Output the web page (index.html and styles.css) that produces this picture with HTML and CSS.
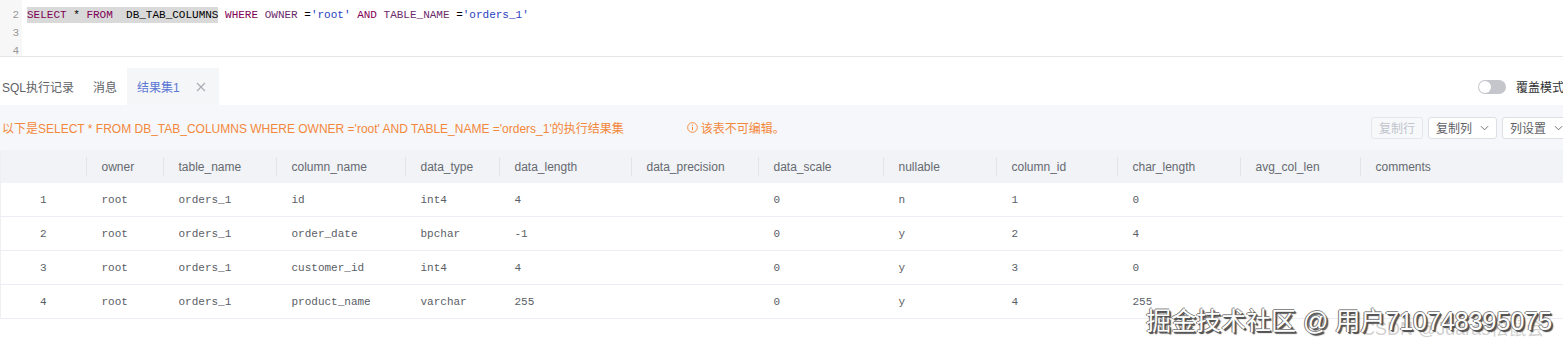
FILE: index.html
```html
<!DOCTYPE html>
<html lang="zh-CN">
<head>
    <meta charset="UTF-8">
    <title>结果集</title>
    <link rel="stylesheet" href="styles.css">
</head>
<body>
    <div class="editor">
        <div class="gutter">
            <div class="ln">1</div>
            <div class="ln">2</div>
            <div class="ln">3</div>
            <div class="ln">4</div>
        </div>
        <div class="code">
            <div class="line"></div>
            <div class="line"><span class="sel"><span class="kw">SELECT</span> * <span class="kw">FROM</span>  DB_TAB_COLUMNS</span> <span class="kw">WHERE</span> <span class="id">OWNER</span> =<span class="str">'root'</span> <span class="kw">AND</span> <span class="id">TABLE_NAME</span> =<span class="str">'orders_1'</span></div>
            <div class="line"></div>
            <div class="line"></div>
        </div>
    </div>

    <div class="tabs-bar">
        <div class="tabs">
            <div class="tab">SQL执行记录</div>
            <div class="tab">消息</div>
            <div class="tab active">结果集1
                <svg class="close" width="10" height="10" viewBox="0 0 10 10"><path d="M1 1L9 9M9 1L1 9" stroke="#a8abb2" stroke-width="1.1" fill="none"/></svg>
            </div>
        </div>
        <div class="mode">
            <span class="switch"><span class="knob"></span></span>
            <span class="mode-label">覆盖模式</span>
        </div>
    </div>

    <div class="toolbar">
        <div class="msg">以下是SELECT * FROM DB_TAB_COLUMNS WHERE OWNER ='root' AND TABLE_NAME ='orders_1'的执行结果集</div>
        <div class="msg warn">
            <svg width="11" height="11" viewBox="0 0 12 12"><circle cx="6" cy="6" r="5.3" stroke="#f3883c" stroke-width="1" fill="none"/><path d="M6 5.2V9" stroke="#f3883c" stroke-width="1.1"/><circle cx="6" cy="3.5" r="0.7" fill="#f3883c"/></svg>
            该表不可编辑。
        </div>
        <div class="actions">
            <button class="btn" disabled>复制行</button>
            <button class="btn">复制列 <svg width="9" height="6" viewBox="0 0 10 6"><path d="M1 1L5 5L9 1" stroke="#606266" stroke-width="1" fill="none"/></svg></button>
            <button class="btn">列设置 <svg width="9" height="6" viewBox="0 0 10 6"><path d="M1 1L5 5L9 1" stroke="#606266" stroke-width="1" fill="none"/></svg></button>
        </div>
    </div>

    <table class="grid">
        <colgroup>
            <col style="width:85px"><col style="width:77px"><col style="width:113px"><col style="width:129px">
            <col style="width:94px"><col style="width:132px"><col style="width:127px"><col style="width:125px">
            <col style="width:113px"><col style="width:121px"><col style="width:123px"><col style="width:120px">
            <col style="width:230px">
        </colgroup>
        <thead>
            <tr>
                <th></th><th>owner</th><th>table_name</th><th>column_name</th><th>data_type</th><th>data_length</th>
                <th>data_precision</th><th>data_scale</th><th>nullable</th><th>column_id</th><th>char_length</th>
                <th>avg_col_len</th><th>comments</th>
            </tr>
        </thead>
        <tbody>
            <tr><td class="no">1</td><td>root</td><td>orders_1</td><td>id</td><td>int4</td><td>4</td><td></td><td>0</td><td>n</td><td>1</td><td>0</td><td></td><td></td></tr>
            <tr><td class="no">2</td><td>root</td><td>orders_1</td><td>order_date</td><td>bpchar</td><td>-1</td><td></td><td>0</td><td>y</td><td>2</td><td>4</td><td></td><td></td></tr>
            <tr><td class="no">3</td><td>root</td><td>orders_1</td><td>customer_id</td><td>int4</td><td>4</td><td></td><td>0</td><td>y</td><td>3</td><td>0</td><td></td><td></td></tr>
            <tr><td class="no">4</td><td>root</td><td>orders_1</td><td>product_name</td><td>varchar</td><td>255</td><td></td><td>0</td><td>y</td><td>4</td><td>255</td><td></td><td></td></tr>
        </tbody>
    </table>

    <div class="wm-back">CSDN @Jdaras松鼠会</div>
    <div class="wm">掘金技术社区 @ 用户710748395075</div>
</body>
</html>
```

FILE: styles.css
```css
body {
    margin: 0;
    font-family: "Liberation Sans", "Noto Sans CJK SC", sans-serif;
    background: #fff;
    width: 1563px;
    height: 345px;
    overflow: hidden;
    position: relative;
}
.editor {
    display: flex;
    height: 56px;
    border-bottom: 1px solid #e4e6ea;
    overflow: hidden;
    font-family: "Liberation Mono", monospace;
    font-size: 11px;
}
.gutter {
    width: 22px;
    background: #f7f7f7;
    margin-top: -12px;
    color: #999;
}
.ln {
    height: 18px;
    line-height: 18px;
    text-align: right;
    padding-right: 3px;
}
.code {
    margin-top: -12px;
    padding-left: 5px;
}
.line {
    height: 18px;
    line-height: 18px;
    white-space: pre;
    color: #000;
}
.sel {
    background: #d9d9d9;
    padding: 2px 0;
}
.kw {
    color: #7f0055;
}
.id {
    color: #6b2a6b;
}
.str {
    color: #2a3fc0;
}
.tabs-bar {
    display: flex;
    justify-content: space-between;
    align-items: flex-end;
    height: 48px;
}
.tabs {
    display: flex;
    align-items: stretch;
    height: 37px;
}
.tab {
    display: flex;
    align-items: center;
    font-size: 12px;
    color: #606266;
    padding: 0 0 0 2px;
}
.tab + .tab {
    padding-left: 19px;
}
.tab.active {
    background: #f5f6f8;
    color: #5b78d4;
    margin-left: 10px;
    padding: 0 13px 0 10px;
}
.close {
    margin-left: 16px;
}
.mode {
    display: flex;
    align-items: center;
    height: 37px;
    margin-right: -1px;
}
.switch {
    position: relative;
    width: 28px;
    height: 14px;
    border-radius: 7px;
    background: #c4c6cc;
    margin-right: 10px;
}
.knob {
    position: absolute;
    top: 1px;
    left: 1px;
    width: 12px;
    height: 12px;
    border-radius: 50%;
    background: #fff;
}
.mode-label {
    font-size: 12px;
    color: #303133;
}
.toolbar {
    display: flex;
    align-items: center;
    height: 45px;
    background: #f5f7fa;
    padding-left: 2px;
}
.msg {
    font-size: 12px;
    color: #f3883c;
}
.warn {
    display: flex;
    align-items: center;
    gap: 3px;
    margin-left: 63px;
}
.actions {
    display: flex;
    gap: 5px;
    margin-left: auto;
    margin-right: -8px;
}
.btn {
    display: flex;
    align-items: center;
    gap: 8px;
    height: 22px;
    padding: 0 7px;
    font-family: "Liberation Sans", "Noto Sans CJK SC", sans-serif;
    font-size: 12px;
    color: #606266;
    background: #fff;
    border: 1px solid #dcdfe6;
    border-radius: 3px;
}
.btn:disabled {
    color: #c0c4cc;
    border-color: #e4e7ed;
    background: #f7f8fa;
}
.grid {
    border-collapse: collapse;
    table-layout: fixed;
    width: 1589px;
    border-left: 1px solid #eef0f3;
}
.grid th {
    height: 33px;
    background: #f1f3f6;
    font-weight: normal;
    font-size: 12px;
    color: #666a70;
    text-align: left;
    padding: 0 0 0 16px;
    position: relative;
}
.grid th + th::before {
    content: "";
    position: absolute;
    left: 0;
    top: 7px;
    bottom: 7px;
    width: 1px;
    background: #e1e4ea;
}
.grid td {
    height: 33px;
    border-bottom: 1px solid #ebeef5;
    font-family: "Liberation Mono", monospace;
    font-size: 11px;
    color: #5a5e66;
    padding: 0 0 0 16px;
}
.grid td.no {
    text-align: center;
    padding: 0;
}
.wm-back {
    position: absolute;
    left: 1362px;
    top: 314px;
    font-size: 18px;
    color: rgba(150, 150, 150, 0.45);
    white-space: nowrap;
}
.wm {
    position: absolute;
    left: 1146px;
    top: 301px;
    font-size: 25px;
    color: #fff;
    white-space: nowrap;
    text-shadow: 1px 1px 0 #555, -1px 0 0 #777, 0 -1px 0 #888, 2px 2px 1px #444;
}
```
